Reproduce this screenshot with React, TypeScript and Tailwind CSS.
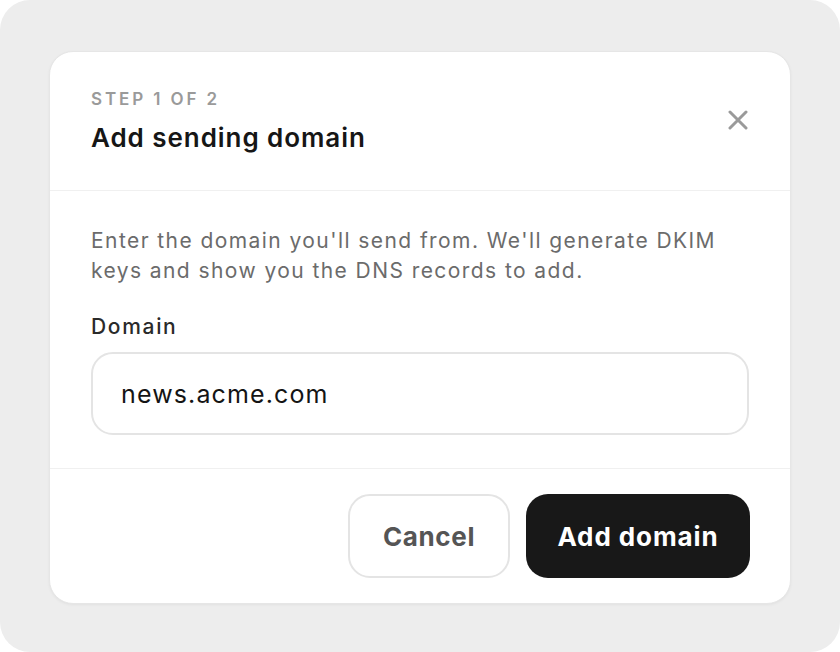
export default function App() {
  return (
    <div className="w-[840px] h-[652px] bg-white" style={{ fontFamily: "Inter, 'Noto Sans', sans-serif" }}>
      <div className="w-full h-full rounded-[30px] bg-[#ededed] pt-[51px] px-[49px]">
        <div className="w-[742px] bg-white rounded-[24px] border border-[#e6e6e6] shadow-[0_1px_3px_rgba(0,0,0,0.05)]">
          <div className="flex items-start justify-between pl-[41px] pr-[41px] pt-[35px] pb-[36px] border-b border-[#f0f0f0]">
            <div className="flex flex-col gap-[11px]">
              <div className="text-[17px] leading-[24px] font-semibold tracking-[0.17em] text-[#9a9a9a]">STEP 1 OF 2</div>
              <div className="text-[26px] leading-[32px] font-semibold tracking-[0.036em] text-[#161616]">Add sending domain</div>
            </div>
            <button className="mt-[21px] mr-[-1px] w-[24px] h-[24px] flex items-center justify-center">
              <svg width="20" height="20" viewBox="0 0 20 20" fill="none" stroke="#9a9a9a" strokeWidth="3" strokeLinecap="round">
                <path d="M2 2 L18 18 M18 2 L2 18" />
              </svg>
            </button>
          </div>
          <div className="pl-[41px] pr-[41px] pt-[35px] pb-[33px] border-b border-[#f0f0f0]">
            <p className="text-[21px] leading-[30px] tracking-[0.068em] text-[#6b6b6b]">
              Enter the domain you'll send from. We'll generate DKIM keys and show you the DNS records to add.
            </p>
            <div className="mt-[27px] text-[21px] leading-[28px] font-medium tracking-[0.08em] text-[#2a2a2a]">Domain</div>
            <div className="mt-[11px] h-[83px] rounded-[22px] border-2 border-[#e4e4e4] flex items-center px-[28px] pt-[3px] text-[25px] tracking-[0.045em] text-[#141414]">
              news.acme.com
            </div>
          </div>
          <div className="flex justify-end gap-[16px] pr-[40px] pt-[25px] pb-[25px]">
            <button className="h-[84px] w-[162px] rounded-[22px] border-2 border-[#e4e4e4] bg-white text-[26px] font-bold tracking-[0.025em] text-[#555555]">
              Cancel
            </button>
            <button className="h-[84px] w-[224px] rounded-[22px] bg-[#181818] text-[26px] font-bold tracking-[0.035em] text-white">
              Add domain
            </button>
          </div>
        </div>
      </div>
    </div>
  );
}
